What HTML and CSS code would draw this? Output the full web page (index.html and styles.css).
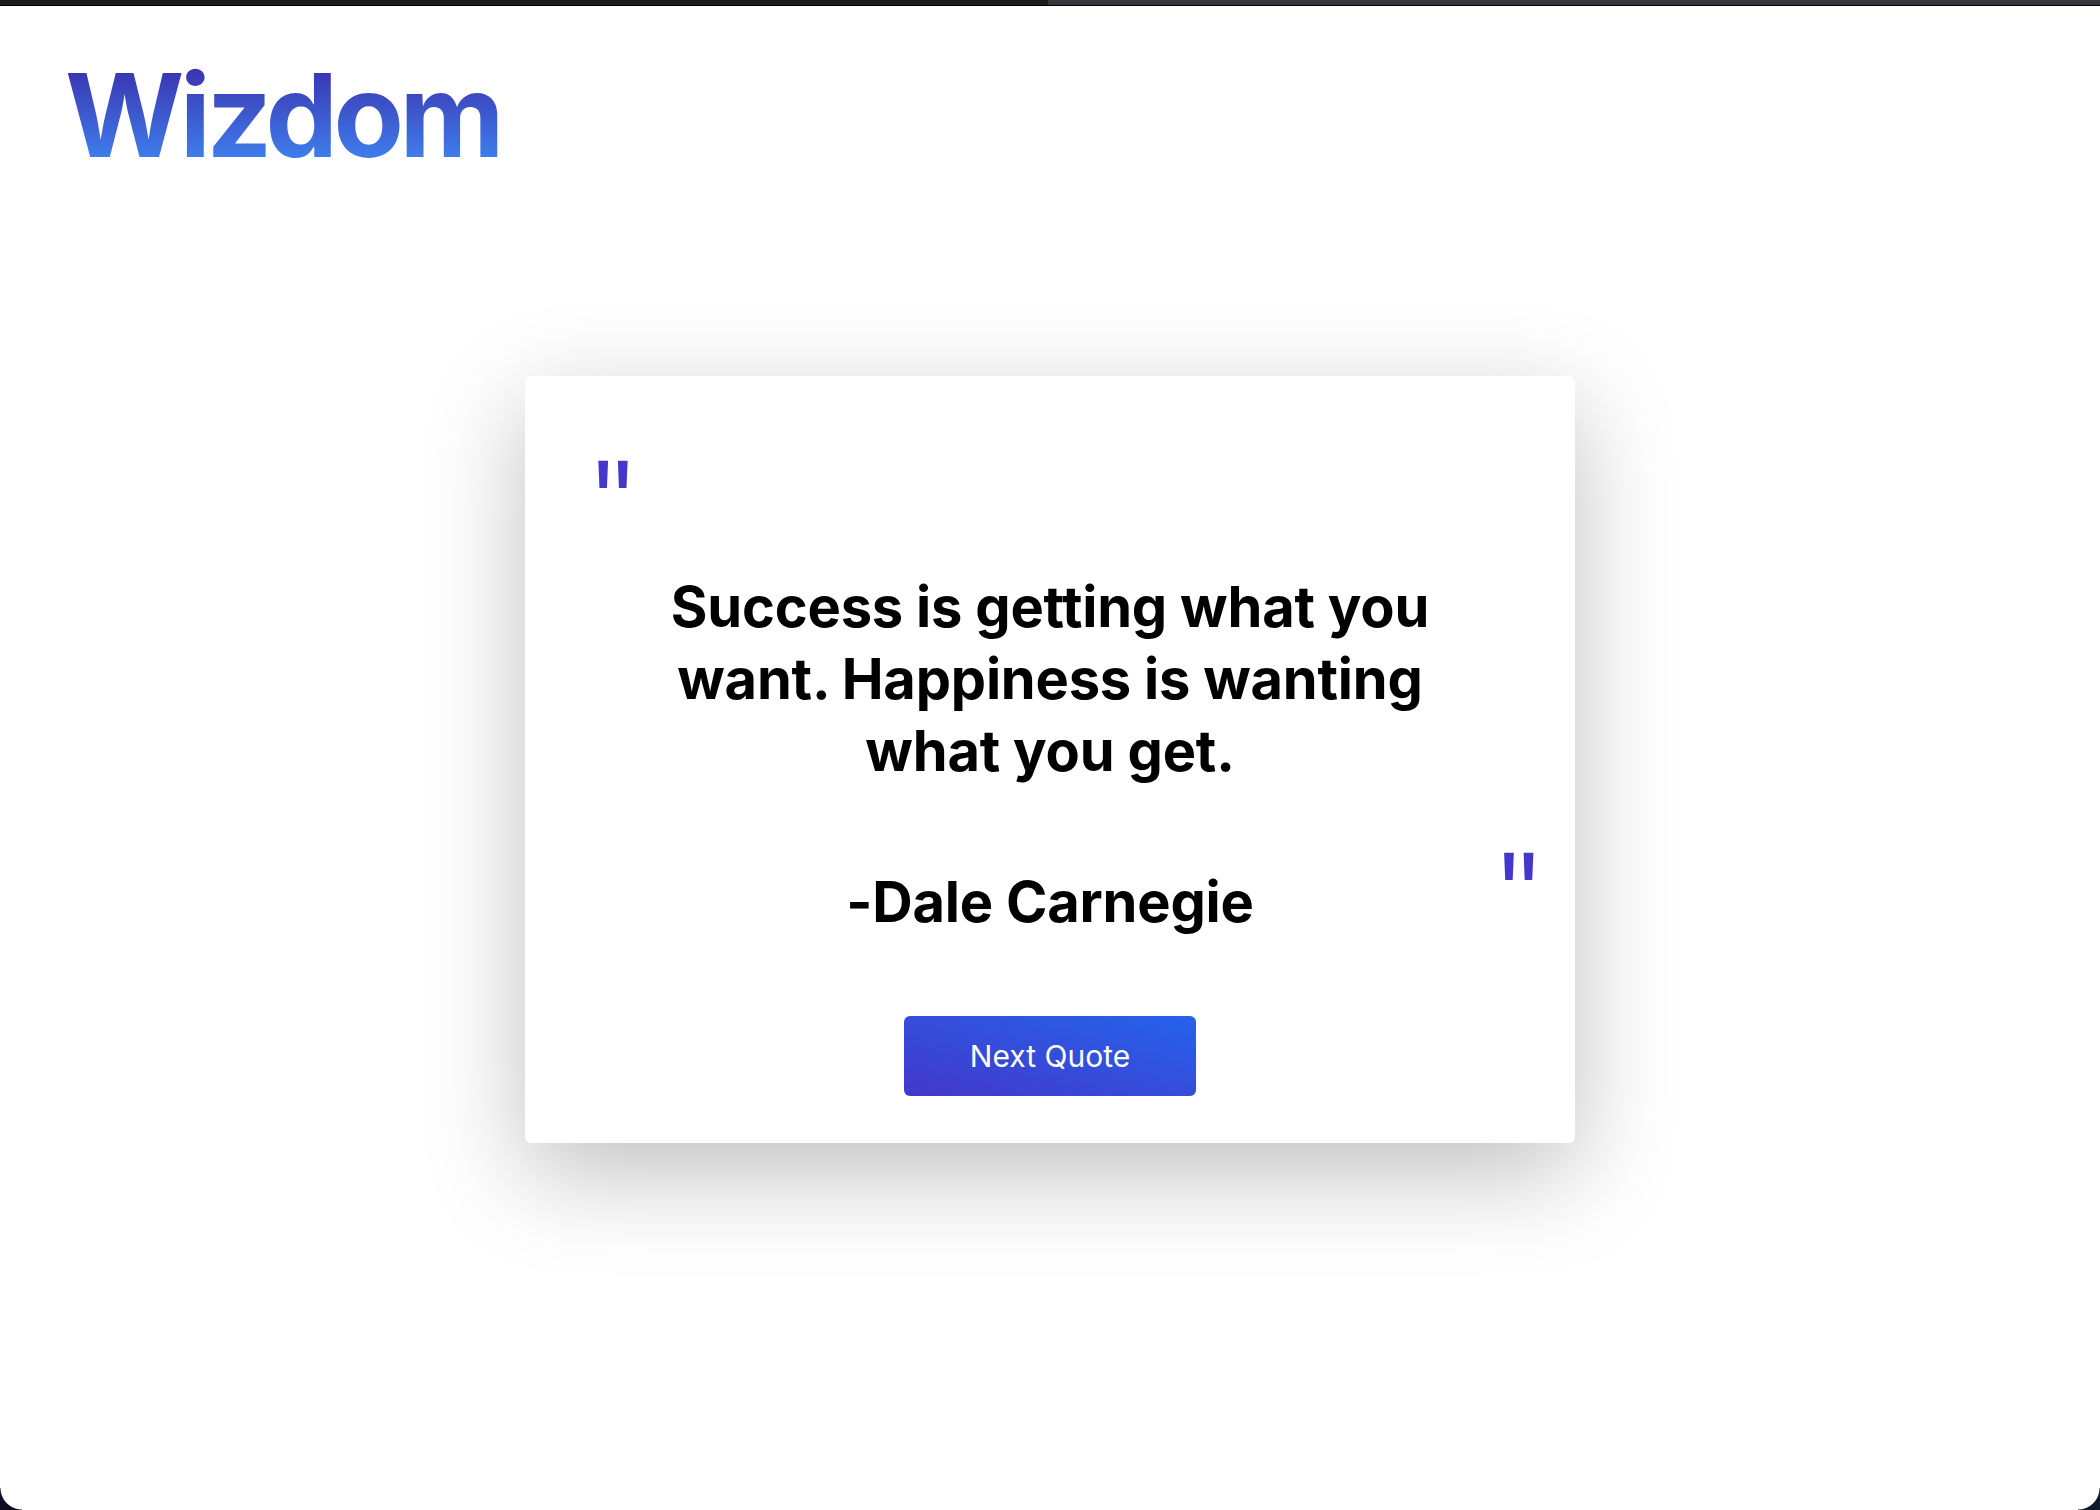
FILE: index.html
```html
<!DOCTYPE html>
<html lang="en">
<head>
<meta charset="utf-8">
<title>Wizdom</title>
<link rel="stylesheet" href="styles.css">
</head>
<body>
<div class="topbar"><div class="tb-left"></div><div class="tb-right"></div></div>
<header class="header">
  <h1 class="logo">Wizdom</h1>
</header>
<main class="main">
  <section class="card">
    <div class="qmark qmark-left">"</div>
    <p class="quote">Success is getting what you want. Happiness is wanting what you get.</p>
    <div class="qmark qmark-right">"</div>
    <p class="author">-Dale Carnegie</p>
    <button class="next-btn" type="button">Next Quote</button>
  </section>
</main>
<div class="corner corner-bl"></div>
<div class="corner corner-br"></div>
</body>
</html>
```
FILE: styles.css
```css
html, body {
  margin: 0;
  padding: 0;
  background: #ffffff;
  font-family: Inter, "Noto Sans", sans-serif;
  color: #000;
}
body {
  min-height: 1510px;
  overflow: hidden;
}
.topbar {
  display: flex;
  height: 5px;
  border-bottom: 1px solid #000;
}
.tb-left {
  width: 1048px;
  background: #1c1b20;
}
.tb-right {
  flex: 1;
  background: #38363c;
}
.header {
  padding: 52px 0 0 65px;
}
.logo {
  margin: 0;
  font-size: 115px;
  line-height: 1;
  font-weight: 700;
  letter-spacing: -4.5px;
  display: inline-block;
  background: linear-gradient(to bottom, #3a35b0 10%, #3f80ee 90%);
  -webkit-background-clip: text;
  background-clip: text;
  color: transparent;
}
.main {
  display: flex;
  justify-content: center;
  padding-top: 203px;
}
.card {
  width: 1050px;
  box-sizing: border-box;
  background: #fff;
  border-radius: 6px;
  box-shadow: 0 30px 100px rgba(0, 0, 0, 0.25);
  display: flex;
  flex-direction: column;
  align-items: center;
  padding: 66px 0 47px;
}
.qmark {
  color: #4338ca;
  font-family: "Liberation Sans", Arial, sans-serif;
  font-size: 126px;
  font-weight: 400;
  line-height: 126px;
  height: 32px;
  transform: scaleX(0.86);
}
.qmark-left {
  align-self: flex-start;
  margin-left: 68px;
  transform-origin: 6px 0;
}
.qmark-right {
  align-self: flex-end;
  margin-right: 35px;
  margin-top: 47px;
  transform-origin: 33px 0;
}
.quote {
  margin: 97px 0 0;
  width: 800px;
  text-align: center;
  font-size: 56px;
  font-weight: 700;
  line-height: 72px;
  letter-spacing: -0.2px;
}
.author {
  margin: 6px 0 0;
  font-size: 56px;
  font-weight: 700;
  line-height: 60px;
  letter-spacing: -0.2px;
}
.next-btn {
  margin-top: 84px;
  width: 292px;
  height: 80px;
  border: 0;
  border-radius: 6px;
  background: linear-gradient(to top right, #4338ca, #2563eb);
  color: #fff;
  font-family: Inter, "Noto Sans", sans-serif;
  font-size: 30px;
  font-weight: 400;
}
.corner {
  position: fixed;
  bottom: 0;
  width: 22px;
  height: 22px;
}
.corner-bl {
  left: 0;
  background: radial-gradient(circle at 22px 0, transparent 21px, #0f0c24 22px);
}
.corner-br {
  right: 0;
  background: radial-gradient(circle at 0 0, transparent 21px, #0c1a2c 22px);
}
```
